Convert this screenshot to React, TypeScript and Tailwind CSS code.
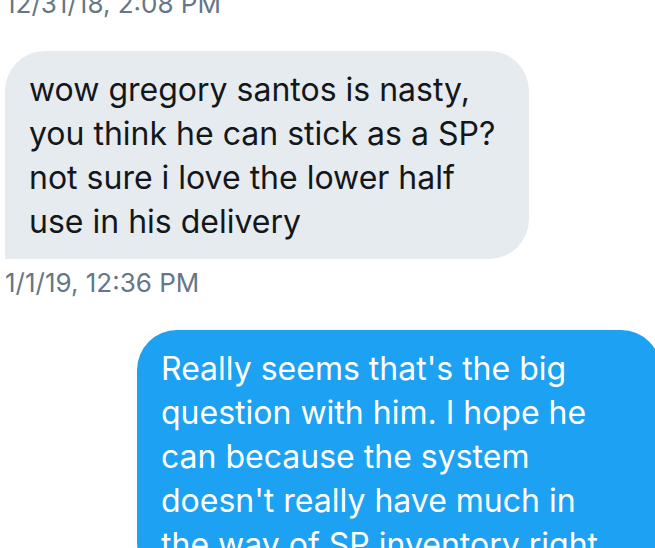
interface Message {
  id: number;
  text: string;
  sentAt?: string;
  mine: boolean;
}

const messages: Message[] = [
  {
    id: 1,
    text: 'wow gregory santos is nasty,\nyou think he can stick as a SP?\nnot sure i love the lower half\nuse in his delivery',
    sentAt: '1/1/19, 12:36 PM',
    mine: false,
  },
  {
    id: 2,
    text: "Really seems that's the big\nquestion with him. I hope he\ncan because the system\ndoesn't really have much in\nthe way of SP inventory right",
    mine: true,
  },
];

function Bubble({ message }: { message: Message }) {
  return (
    <li className={message.mine ? 'flex flex-col items-end' : 'flex flex-col items-start'}>
      <p
        className={
          message.mine
            ? '-mr-1.5 w-4/5 rounded-t-[40px] rounded-bl-[40px] bg-[#1da1f2] px-6 pt-[17px] pb-[15px] text-[32px] leading-[44px] whitespace-pre-line text-white'
            : 'ml-[5px] w-4/5 rounded-t-[40px] rounded-br-[40px] bg-[#e6ebef] px-6 pt-[17px] pb-[15px] text-[32px] leading-[44px] whitespace-pre-line text-[#14171a]'
        }
      >
        {message.text}
      </p>
      {message.sentAt && (
        <time className="mt-2 pl-[5px] text-[26px] leading-[31px] text-[#657786]">{message.sentAt}</time>
      )}
    </li>
  );
}

export default function App() {
  return (
    <main className="h-screen overflow-hidden bg-white font-['Inter','Liberation_Sans',sans-serif]">
      <time className="-mt-3 block pl-[5px] text-[26px] leading-[31px] text-[#657786]">12/31/18, 2:08 PM</time>
      <ul className="mt-8 flex flex-col gap-8">
        {messages.map((message) => (
          <Bubble key={message.id} message={message} />
        ))}
      </ul>
    </main>
  );
}
